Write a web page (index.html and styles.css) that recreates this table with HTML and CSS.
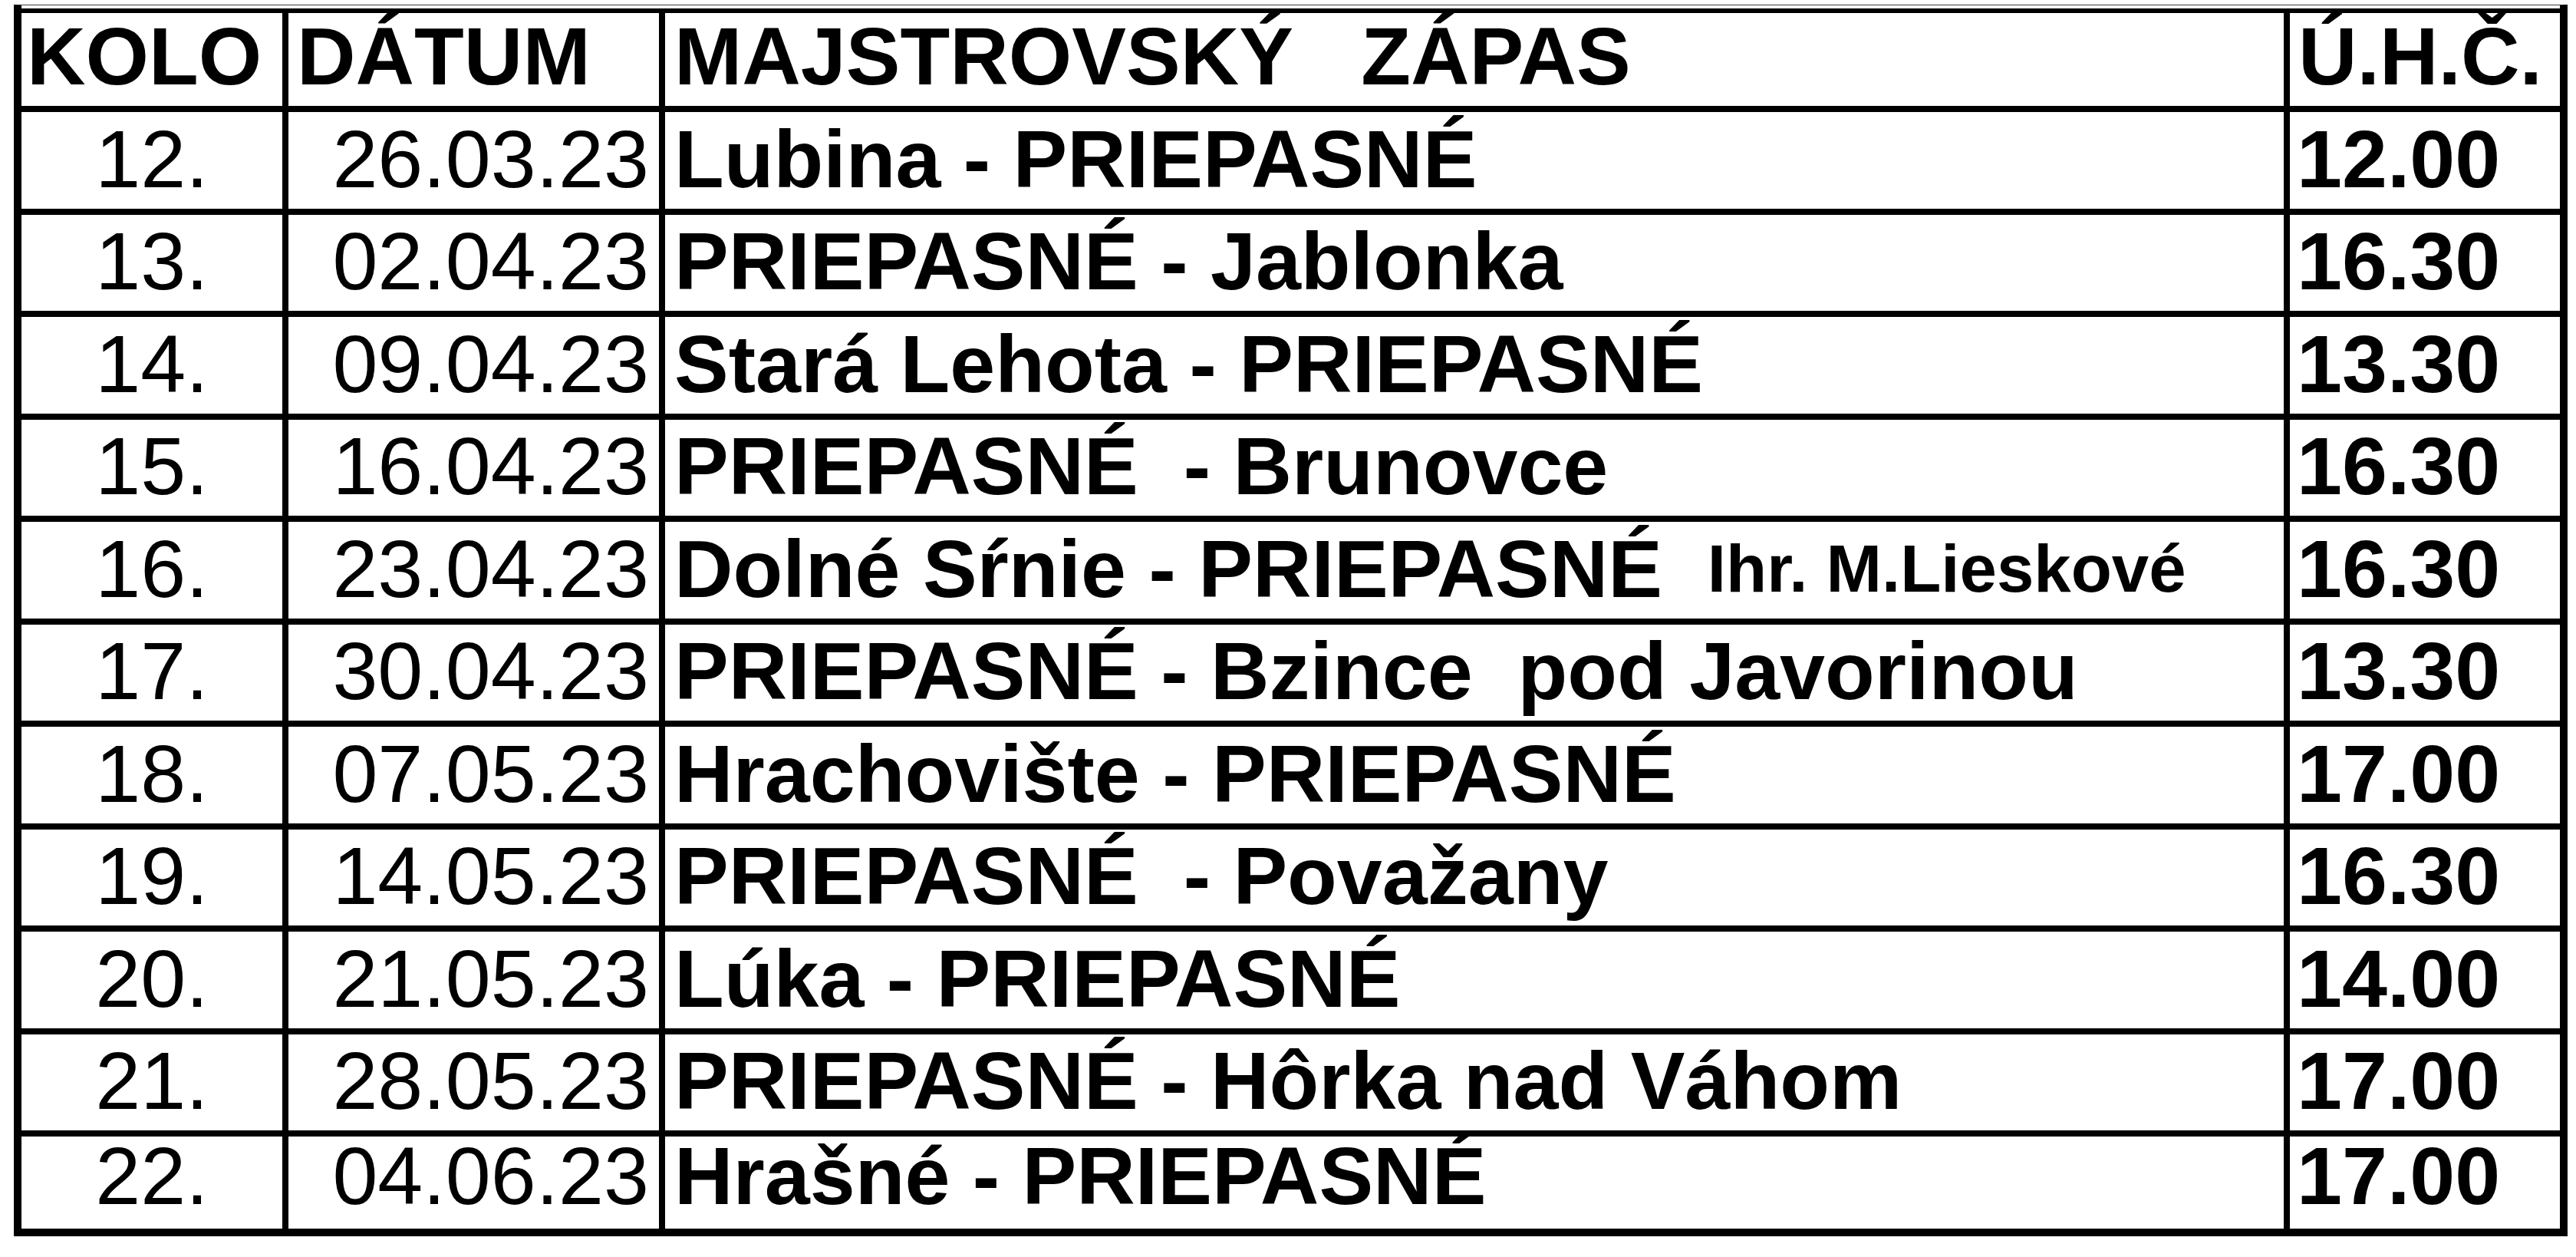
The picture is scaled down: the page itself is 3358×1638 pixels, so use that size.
FILE: index.html
```html
<!DOCTYPE html>
<html lang="sk">
<head>
<meta charset="utf-8">
<title>Rozpis zápasov</title>
<link rel="stylesheet" href="styles.css">
</head>
<body>
<div class="sheet">
  <div class="topgap"></div>
  <div class="grid">
    <div class="cell head c1">KOLO</div>
    <div class="cell head c2">DÁTUM</div>
    <div class="cell head c3">MAJSTROVSKÝ   ZÁPAS</div>
    <div class="cell head c4">Ú.H.Č.</div>

    <div class="cell num">12.</div><div class="cell date">26.03.23</div><div class="cell match">Lubina - PRIEPASNÉ</div><div class="cell time">12.00</div>
    <div class="cell num">13.</div><div class="cell date">02.04.23</div><div class="cell match">PRIEPASNÉ - Jablonka</div><div class="cell time">16.30</div>
    <div class="cell num">14.</div><div class="cell date">09.04.23</div><div class="cell match">Stará Lehota - PRIEPASNÉ</div><div class="cell time">13.30</div>
    <div class="cell num">15.</div><div class="cell date">16.04.23</div><div class="cell match">PRIEPASNÉ  - Brunovce</div><div class="cell time">16.30</div>
    <div class="cell num">16.</div><div class="cell date">23.04.23</div><div class="cell match">Dolné Sŕnie - PRIEPASNÉ  <span class="note">Ihr. M.Lieskové</span></div><div class="cell time">16.30</div>
    <div class="cell num">17.</div><div class="cell date">30.04.23</div><div class="cell match">PRIEPASNÉ - Bzince  pod Javorinou</div><div class="cell time">13.30</div>
    <div class="cell num">18.</div><div class="cell date">07.05.23</div><div class="cell match">Hrachovište - PRIEPASNÉ</div><div class="cell time">17.00</div>
    <div class="cell num">19.</div><div class="cell date">14.05.23</div><div class="cell match">PRIEPASNÉ  - Považany</div><div class="cell time">16.30</div>
    <div class="cell num">20.</div><div class="cell date">21.05.23</div><div class="cell match">Lúka - PRIEPASNÉ</div><div class="cell time">14.00</div>
    <div class="cell num">21.</div><div class="cell date">28.05.23</div><div class="cell match">PRIEPASNÉ - Hôrka nad Váhom</div><div class="cell time">17.00</div>
    <div class="cell num last">22.</div><div class="cell date last">04.06.23</div><div class="cell match last">Hrašné - PRIEPASNÉ</div><div class="cell time last">17.00</div>
  </div>
</div>
</body>
</html>
```
FILE: styles.css
```css
html, body {
  margin: 0;
  padding: 0;
  background: #fff;
}

body {
  font-family: "Liberation Sans", Arial, sans-serif;
  color: #000;
}

.sheet {
  margin: 6px 0 0 18px;
  width: 3309px;
  border-left: 10px solid #000;
  border-right: 10px solid #000;
  border-bottom: 10px solid #000;
  border-top: 1px solid #3c3c3c;
}

.topgap {
  height: 4px;
  background: #fff;
  border-bottom: 6px solid #000;
}

.grid {
  display: grid;
  grid-template-columns: 340px 483px 2110px 352px;
  grid-template-rows: 121px repeat(10, 125.5px) 120px;
  gap: 8px;
  background: #000;
}

.cell {
  background: #fff;
  display: flex;
  align-items: flex-end;
  padding-bottom: 12px;
  font-size: 106px;
  line-height: 106px;
  white-space: pre;
  box-sizing: border-box;
}

.head {
  font-weight: bold;
}

.head.c1 { padding-left: 7px; }
.head.c2 { padding-left: 11px; }
.head.c3 { padding-left: 12px; }
.head.c4 { padding-left: 11px; }

.num {
  justify-content: center;
}

.date {
  justify-content: flex-end;
  padding-right: 13px;
}

.match {
  font-weight: bold;
  padding-left: 12px;
}

.time {
  font-weight: bold;
  padding-left: 9px;
}

.note {
  font-size: 87px;
}

.last {
  padding-bottom: 16px;
}
```
